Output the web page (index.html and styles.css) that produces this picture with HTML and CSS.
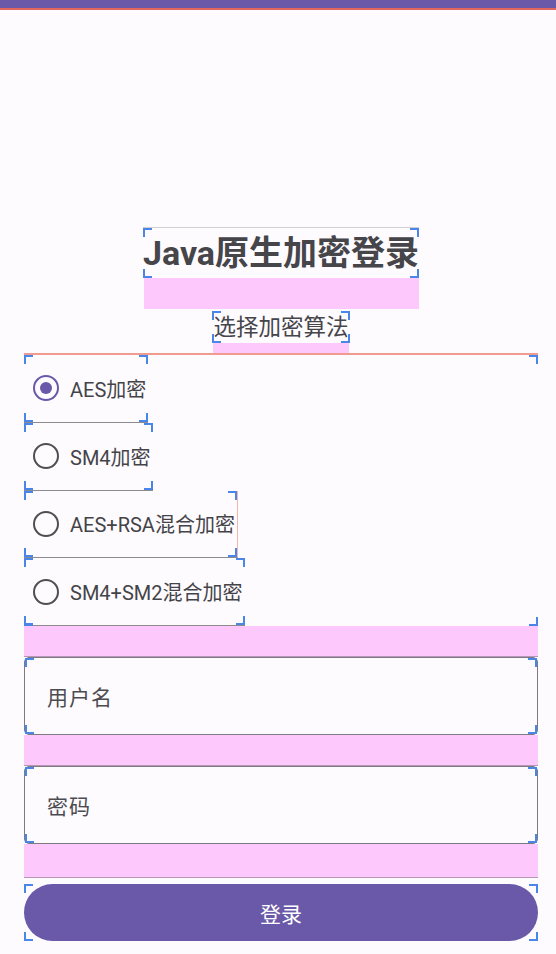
FILE: index.html
```html
<!DOCTYPE html>
<html lang="zh">
<head>
<meta charset="utf-8">
<title>Java原生加密登录</title>
<link rel="stylesheet" href="styles.css">
</head>
<body>
<div class="statusbar"></div>
<main class="content">
  <div class="head">
    <h1 class="title b">Java原生加密登录</h1>
    <div class="margin title-margin"></div>
    <div class="subtitle b">选择加密算法</div>
    <div class="margin sub-margin"></div>
  </div>
  <div class="radio-group b">
    <label class="radio b checked"><span class="dot"></span><span>AES加密</span></label>
    <label class="radio b"><span class="dot"></span><span>SM4加密</span></label>
    <label class="radio b"><span class="dot"></span><span>AES+RSA混合加密</span></label>
    <label class="radio b"><span class="dot"></span><span>SM4+SM2混合加密</span></label>
  </div>
  <div class="margin gap"></div>
  <div class="field b"><span class="placeholder">用户名</span></div>
  <div class="margin gap"></div>
  <div class="field b"><span class="placeholder">密码</span></div>
  <div class="margin gap gap-last"></div>
  <button class="login b">登录</button>
</main>
</body>
</html>
```

FILE: styles.css
```css
* { box-sizing: border-box; }
html, body {
  margin: 0;
  padding: 0;
  background: #fefbff;
  font-family: Roboto, "Noto Sans CJK SC", sans-serif;
  color: #434347;
}
.statusbar {
  height: 10px;
  background: #6a58a8;
  border-bottom: 2px solid #e2655e;
}
.content {
  display: flex;
  flex-direction: column;
  padding: 217px 18px 0 24px;
}
.head {
  display: flex;
  flex-direction: column;
  align-items: center;
}
.b { position: relative; }
.b::after {
  content: "";
  position: absolute;
  inset: 0;
  pointer-events: none;
  background:
    linear-gradient(#4a86e8, #4a86e8) left top / 9px 2px no-repeat,
    linear-gradient(#4a86e8, #4a86e8) left top / 2px 9px no-repeat,
    linear-gradient(#4a86e8, #4a86e8) right top / 9px 2px no-repeat,
    linear-gradient(#4a86e8, #4a86e8) right top / 2px 9px no-repeat,
    linear-gradient(#4a86e8, #4a86e8) left bottom / 9px 2px no-repeat,
    linear-gradient(#4a86e8, #4a86e8) left bottom / 2px 9px no-repeat,
    linear-gradient(#4a86e8, #4a86e8) right bottom / 9px 2px no-repeat,
    linear-gradient(#4a86e8, #4a86e8) right bottom / 2px 9px no-repeat;
}
.title {
  margin: 0;
  height: 51px;
  line-height: 51px;
  font-size: 34px;
  font-weight: 700;
  color: #45454a;
  white-space: nowrap;
  border-top: 1px solid #cfcfd4;
}
.margin { background: #fdc9fd; }
.title-margin {
  width: 275px;
  height: 31px;
  margin-bottom: 2px;
}
.subtitle {
  height: 32px;
  line-height: 32px;
  font-size: 22.5px;
  color: #45454a;
  padding: 0 1px;
  white-space: nowrap;
}
.sub-margin {
  width: 136px;
  height: 10px;
}
.radio-group {
  display: flex;
  flex-direction: column;
  align-items: flex-start;
  border-top: 2px solid #f19a8f;
  height: 273px;
}
.radio {
  display: flex;
  align-items: center;
  gap: 11px;
  height: 68px;
  padding-left: 9px;
  padding-right: 2px;
  font-size: 20px;
  color: #444448;
  white-space: nowrap;
  border-bottom: 1px solid #8c8c90;
}
.radio:nth-child(3) { border-right: 1px solid #f4b6ac; }
.dot {
  width: 26px;
  height: 26px;
  border-radius: 50%;
  border: 2.5px solid #4f4f53;
  flex: none;
  display: flex;
  align-items: center;
  justify-content: center;
}
.checked .dot { border-color: #6a58a8; }
.checked .dot::before {
  content: "";
  width: 12px;
  height: 12px;
  border-radius: 50%;
  background: #6a58a8;
}
.gap {
  height: 31px;
  border-bottom: 1px solid #b896b8;
}
.field {
  height: 78px;
  border: 1.5px solid #7c7b80;
  border-radius: 5px;
  display: flex;
  align-items: center;
  padding-left: 22px;
  background: #fefbff;
}
.placeholder {
  font-size: 21px;
  letter-spacing: 1px;
  color: #4c4c50;
}
.gap-last {
  height: 34px;
  margin-bottom: 6px;
}
.login {
  height: 57px;
  border: none;
  border-radius: 29px;
  background: #6a58a8;
  color: #ffffff;
  font-family: Roboto, "Noto Sans CJK SC", sans-serif;
  font-size: 21px;
  padding: 0;
}
```
